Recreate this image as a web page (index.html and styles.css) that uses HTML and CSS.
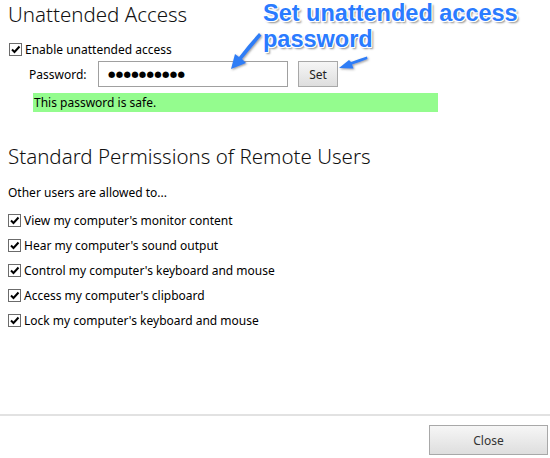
FILE: index.html
```html
<!DOCTYPE html>
<html>
<head>
<meta charset="utf-8">
<link rel="stylesheet" href="styles.css">
</head>
<body>
<div class="page">
  <div class="content">
    <h1 class="title">Unattended Access</h1>
    <label class="check-row first">
      <span class="box"><svg viewBox="0 0 11 11" width="11" height="11"><path d="M2 5.5 L4.5 8 L9.5 2.5" fill="none" stroke="#000" stroke-width="2"/></svg></span>
      <span>Enable unattended access</span>
    </label>
    <div class="pw-row">
      <span class="pw-label">Password:</span>
      <div class="pw-input">●●●●●●●●●●</div>
      <button class="btn set">Set</button>
    </div>
    <div class="safe">This password is safe.</div>

    <h1 class="title second">Standard Permissions of Remote Users</h1>
    <p class="intro">Other users are allowed to...</p>
    <div class="perm-list">
      <label class="check-row">
        <span class="box"><svg viewBox="0 0 11 11" width="11" height="11"><path d="M2 5.5 L4.5 8 L9.5 2.5" fill="none" stroke="#000" stroke-width="2"/></svg></span>
        <span>View my computer's monitor content</span>
      </label>
      <label class="check-row">
        <span class="box"><svg viewBox="0 0 11 11" width="11" height="11"><path d="M2 5.5 L4.5 8 L9.5 2.5" fill="none" stroke="#000" stroke-width="2"/></svg></span>
        <span>Hear my computer's sound output</span>
      </label>
      <label class="check-row">
        <span class="box"><svg viewBox="0 0 11 11" width="11" height="11"><path d="M2 5.5 L4.5 8 L9.5 2.5" fill="none" stroke="#000" stroke-width="2"/></svg></span>
        <span>Control my computer's keyboard and mouse</span>
      </label>
      <label class="check-row">
        <span class="box"><svg viewBox="0 0 11 11" width="11" height="11"><path d="M2 5.5 L4.5 8 L9.5 2.5" fill="none" stroke="#000" stroke-width="2"/></svg></span>
        <span>Access my computer's clipboard</span>
      </label>
      <label class="check-row">
        <span class="box"><svg viewBox="0 0 11 11" width="11" height="11"><path d="M2 5.5 L4.5 8 L9.5 2.5" fill="none" stroke="#000" stroke-width="2"/></svg></span>
        <span>Lock my computer's keyboard and mouse</span>
      </label>
    </div>
  </div>
  <div class="footer">
    <button class="btn close">Close</button>
  </div>

  <div class="callout">Set unattended access<br>password</div>
  <svg class="arrows" width="550" height="100" viewBox="0 0 550 100">
    <defs>
      <filter id="sh" x="-20%" y="-20%" width="140%" height="140%">
        <feDropShadow dx="1" dy="1" stdDeviation="1" flood-color="#555" flood-opacity="0.6"/>
      </filter>
    </defs>
    <g fill="#2f7df6" filter="url(#sh)">
      <path d="M259 33 L261.5 35.5 Q251 48 242 59 L246 63 L231 69 L235 54 L239 57 Q248 45 259 33 Z"/>
      <path d="M367 56.5 L367.5 59 Q360 62 352 64.5 L353.5 68.5 L339 68 L349 60 L351 62 Q359 59 367 56.5 Z"/>
    </g>
  </svg>
</div>
</body>
</html>
```

FILE: styles.css
```css
* { box-sizing: border-box; }
html, body { margin: 0; padding: 0; background: #fff; }
body {
  font-family: "Noto Sans", "Open Sans", sans-serif;
  font-size: 12px;
  color: #000;
}
.page {
  position: relative;
  width: 550px;
  height: 458px;
  display: flex;
  flex-direction: column;
  overflow: hidden;
}
.content {
  flex: 1;
  padding: 0 8px;
}
.title {
  margin: 0;
  font-weight: 300;
  font-size: 20.5px;
  line-height: 28px;
  color: #111;
}
.title.second { margin-top: 30px; }
.check-row {
  display: flex;
  align-items: center;
  gap: 3px;
  height: 17px;
  line-height: 17px;
}
.check-row.first { margin-top: 13px; margin-left: 1px; }
.box {
  width: 13px;
  height: 13px;
  border: 1px solid #6b6b6b;
  background: #fff;
  display: flex;
  align-items: center;
  justify-content: center;
  flex: none;
}
.box svg { display: block; }
.pw-row {
  display: flex;
  align-items: center;
  margin-top: 3px;
  padding-left: 21px;
  height: 26px;
}
.pw-label { width: 69px; }
.pw-input {
  width: 190px;
  height: 26px;
  border: 1px solid #a0a0a0;
  padding-left: 9px;
  font-family: "DejaVu Sans", sans-serif;
  font-size: 8.5px;
  line-height: 24px;
  letter-spacing: 0.3px;
}
.btn {
  font-family: inherit;
  font-size: 12px;
  color: #222;
  border: 1px solid #a8a8a8;
  background: linear-gradient(#f6f6f6, #dedede);
  padding: 0;
}
.set {
  margin-left: 10px;
  width: 40px;
  height: 26px;
}
.safe {
  margin-top: 6px;
  margin-left: 25px;
  width: 405px;
  height: 19px;
  line-height: 19px;
  background: #94fc8e;
  padding-left: 1px;
}
.intro {
  margin: 14px 0 0;
  line-height: 17px;
}
.perm-list {
  margin-top: 11px;
  display: flex;
  flex-direction: column;
  gap: 8px;
}
.footer {
  height: 44px;
  border-top: 2px solid #e2e2e2;
  display: flex;
  justify-content: flex-end;
  padding: 9px 2px 0 0;
}
.close {
  width: 119px;
  height: 30px;
  color: #333;
}
.callout {
  position: absolute;
  left: 263px;
  top: 0;
  font-family: "Liberation Sans", Arial, sans-serif;
  font-weight: bold;
  font-size: 23.5px;
  line-height: 26px;
  color: #2a7bff;
  text-shadow:
    1px 0 0 #fff, -1px 0 0 #fff, 0 1px 0 #fff, 0 -1px 0 #fff,
    1px 1px 0 #fff, -1px -1px 0 #fff, 1px -1px 0 #fff, -1px 1px 0 #fff,
    2px 2px 2px rgba(0,0,0,0.45);
}
.arrows {
  position: absolute;
  left: 0;
  top: 0;
}
```
